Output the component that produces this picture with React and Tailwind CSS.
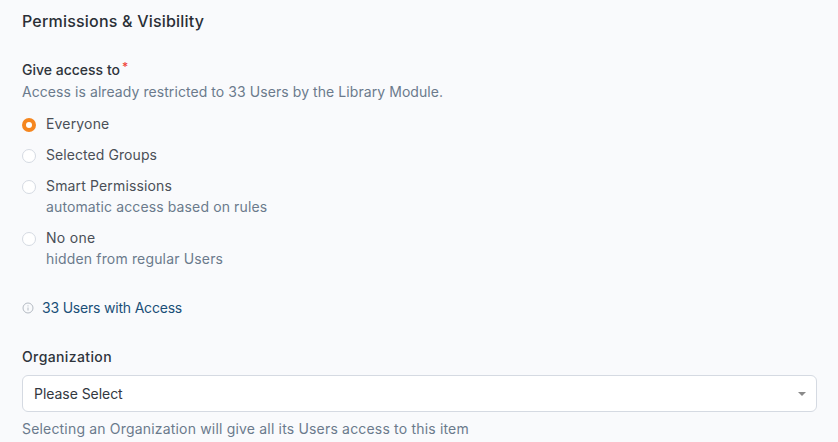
import React from "react";

const font = { fontFamily: "Inter, sans-serif" };

const Radio = ({ checked, label, hint, track, hintTrack }) => (
  <div className="flex items-start gap-[10px]">
    {checked ? (
      <span className="mt-[5px] flex h-[14px] w-[14px] shrink-0 items-center justify-center rounded-full bg-[#f5861f]">
        <span className="h-[6px] w-[6px] rounded-full bg-white" />
      </span>
    ) : (
      <span className="mt-[5px] h-[14px] w-[14px] shrink-0 rounded-full border border-[#d5dae2] bg-white" />
    )}
    <div>
      <div className={`text-[14px] leading-[21px] text-[#4a4f57] ${track}`}>{label}</div>
      {hint && <div className={`text-[14px] leading-[21px] text-[#6b7a8c] ${hintTrack}`}>{hint}</div>}
    </div>
  </div>
);

export default function App() {
  return (
    <div className="h-[442px] w-[838px] overflow-hidden bg-[#f9fafc] pl-[22px] pr-[21px]" style={font}>
      <h2 className="pt-[10px] text-[16px] font-medium leading-[22px] tracking-[0.2px] text-[#2a2f36]">
        Permissions &amp; Visibility
      </h2>

      <div className="mt-[27px] flex text-[14px] font-medium leading-[22px] text-[#2f343b]">
        Give access to<span className="ml-[2px] text-[12px] leading-[16px] text-[#f04438]">*</span>
      </div>
      <p className="text-[14px] leading-[21px] tracking-[0.07px] text-[#6b7a8c]">
        Access is already restricted to 33 Users by the Library Module.
      </p>

      <div className="mt-[11px] flex flex-col gap-[10px]">
        <Radio checked label="Everyone" track="tracking-[0.17px]" />
        <Radio label="Selected Groups" track="tracking-[0.07px]" />
        <Radio label="Smart Permissions" hint="automatic access based on rules" track="tracking-[0.15px]" hintTrack="tracking-[0.12px]" />
        <Radio label="No one" hint="hidden from regular Users" track="tracking-[0.3px]" hintTrack="tracking-[0.16px]" />
      </div>

      <div className="mt-[28px] flex items-center gap-[8px]">
        <svg width="12" height="12" viewBox="0 0 12 12" fill="none" stroke="#b4bac3" strokeWidth="1">
          <circle cx="6" cy="6" r="5" />
          <path d="M6 5.5v3M6 3.4v1" />
        </svg>
        <span className="text-[14px] leading-[21px] tracking-[-0.2px] text-[#1a4f78]">33 Users with Access</span>
      </div>

      <div className="mt-[28px] text-[14px] font-medium leading-[21px] tracking-[0.38px] text-[#2f343b]">Organization</div>
      <div className="mt-[8px] flex h-[37px] items-center justify-between rounded-[6px] border border-[#d5dae2] bg-white pl-[11px] pr-[10px]">
        <span className="text-[14px] tracking-[-0.05px] text-[#33383f]">Please Select</span>
        <span className="mt-[1px] h-0 w-0 border-x-[4px] border-t-[4px] border-x-transparent border-t-[#8a8a8a]" />
      </div>
      <p className="mt-[6px] text-[14px] leading-[21px] tracking-[0.18px] text-[#6b7a8c]">
        Selecting an Organization will give all its Users access to this item
      </p>
    </div>
  );
}
